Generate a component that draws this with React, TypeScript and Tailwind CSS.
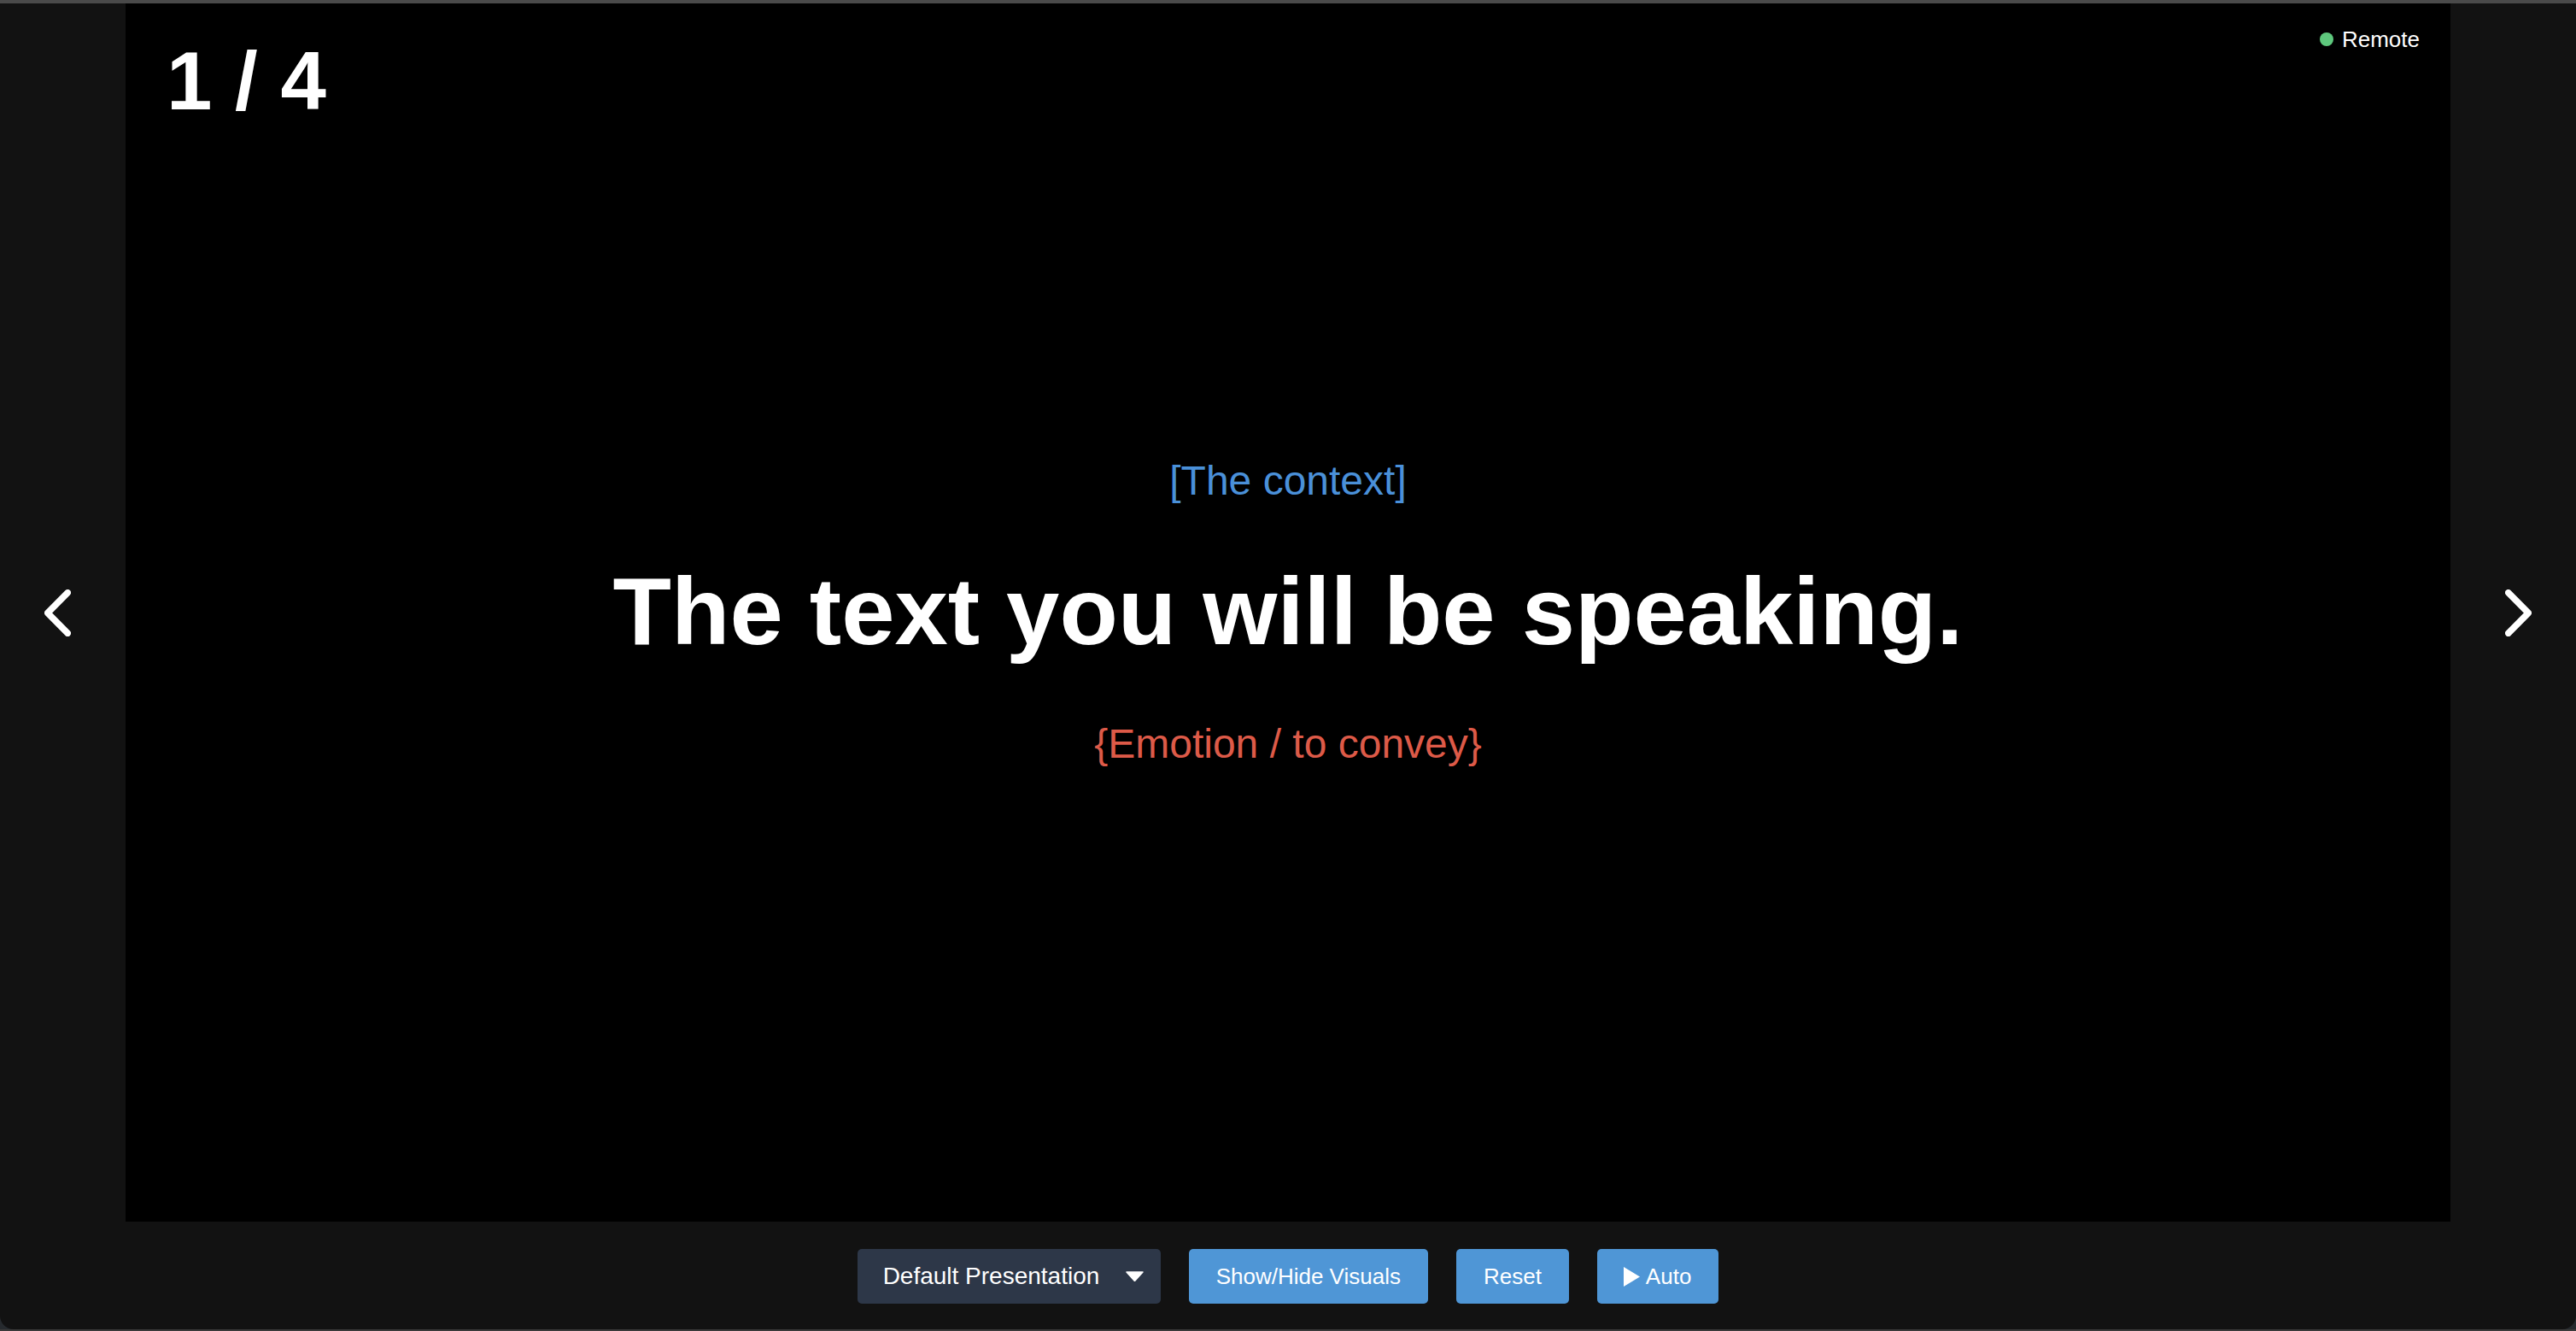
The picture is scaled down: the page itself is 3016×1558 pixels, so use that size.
import React from "react";

function Chevron({ dir }: { dir: "left" | "right" }) {
  const pts = dir === "left" ? "27.25,3.75 3.75,27.5 27.25,51.25" : "3.75,3.75 27.25,27.5 3.75,51.25";
  return (
    <svg width="31" height="55" viewBox="0 0 31 55" fill="none">
      <polyline points={pts} stroke="#ffffff" strokeWidth="7.5" strokeLinecap="round" strokeLinejoin="round" />
    </svg>
  );
}

export default function App() {
  const font = { fontFamily: '"Liberation Sans", Arial, Helvetica, sans-serif' };
  return (
    <div className="w-full h-[1558px] bg-[#262a2e] flex flex-col" style={font}>
      <div className="h-[4px] w-full bg-[#4a4a4a] shrink-0" />
      <div className="flex-1 flex flex-col bg-[#121212] rounded-b-[16px] overflow-hidden">
        <div className="flex h-[1426px] shrink-0">
          <div className="w-[147px] shrink-0 flex items-center justify-center pr-[12px]">
            <Chevron dir="left" />
          </div>
          <div className="flex-1 bg-black relative flex flex-col items-center justify-center">
            <div className="absolute left-[48px] top-[43px] text-[96px] leading-none font-bold text-white">
              1 / 4
            </div>
            <div className="absolute right-[36px] top-[29px] flex items-center gap-[10px]">
              <span className="w-[16px] h-[16px] rounded-full bg-[#5ec87d]" />
              <span className="text-[26px] leading-none text-white">Remote</span>
            </div>
            <div className="text-[48px] leading-none text-[#4a90d9]">[The context]</div>
            <div className="mt-[73px] text-[112px] leading-none font-bold text-white">
              The text you will be speaking.
            </div>
            <div className="mt-[75px] text-[48px] leading-none text-[#dd5a48]">{"{Emotion / to convey}"}</div>
          </div>
          <div className="w-[147px] shrink-0 flex items-center justify-center pl-[12px]">
            <Chevron dir="right" />
          </div>
        </div>
        <div className="flex-1 flex items-start justify-center pt-[32px] gap-[33px]">
          <div className="h-[64px] w-[355px] rounded-[5px] bg-[#2d3748] flex items-center pl-[30px] pr-[20px] text-white text-[28px] leading-none">
            <span className="flex-1">Default Presentation</span>
            <svg width="21" height="12" viewBox="0 0 21 12">
              <polygon points="1,1 20,1 10.5,11.5" fill="#ffffff" stroke="#ffffff" strokeWidth="1.5" strokeLinejoin="round" />
            </svg>
          </div>
          <div className="h-[64px] rounded-[5px] bg-[#4f96d6] flex items-center px-[32px] text-white text-[26px] leading-none">
            Show/Hide Visuals
          </div>
          <div className="h-[64px] rounded-[5px] bg-[#4f96d6] flex items-center px-[32px] text-white text-[26px] leading-none">
            Reset
          </div>
          <div className="h-[64px] rounded-[5px] bg-[#4f96d6] flex items-center pl-[31px] pr-[32px] text-white text-[26px] leading-none gap-[7px]">
            <svg width="19" height="23" viewBox="0 0 19 23">
              <polygon points="0,0 19,11.5 0,23" fill="#ffffff" />
            </svg>
            <span>Auto</span>
          </div>
        </div>
        <div className="h-[2px] shrink-0" />
      </div>
      <div className="h-[2px] w-full bg-[#3a3a3a] shrink-0" />
    </div>
  );
}
